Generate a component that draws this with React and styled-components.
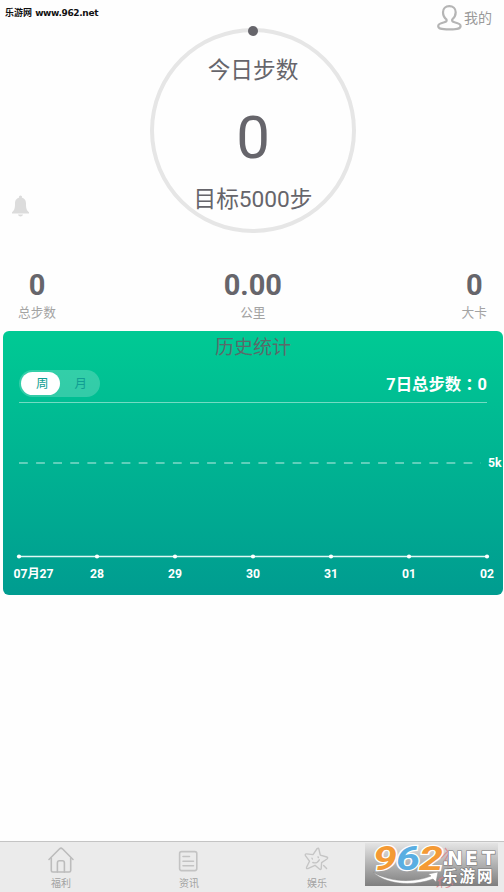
import React, { useState } from 'react';
import styled, { createGlobalStyle } from 'styled-components';

const GlobalStyle = createGlobalStyle`
  * {
    box-sizing: border-box;
  }

  body {
    margin: 0;
    background: #fefefe;
    font-family: Roboto, 'Noto Sans CJK SC', sans-serif;
    color: #66656b;
    overflow: hidden;
  }
`;

const Page = styled.div`
  display: flex;
  flex-direction: column;
  width: 504px;
  height: 892px;
  overflow: hidden;
  position: relative;
`;

const Header = styled.header`
  display: flex;
  justify-content: space-between;
  align-items: flex-start;
  height: 28px;
  padding: 4px 12px 0 5px;
`;

const SiteName = styled.span`
  margin-top: 2px;
  font-family: 'DejaVu Sans', 'Noto Sans CJK SC', sans-serif;
  font-size: 9px;
  line-height: 14px;
  font-weight: bold;
  color: #111;
  white-space: nowrap;

  span {
    letter-spacing: -0.35px;
  }
`;

const Profile = styled.a`
  display: flex;
  align-items: center;
  gap: 2px;
  font-size: 14px;
  line-height: 28px;
  color: #9a9a9a;

  svg {
    display: block;
    margin-top: -2px;
  }
`;

const Summary = styled.section`
  display: grid;
  grid-template-columns: 150px 206px 1fr;
  height: 239px;
`;

const Bell = styled.div`
  align-self: end;
  padding: 0 0 50px 11px;

  svg {
    display: block;
  }
`;

const Ring = styled.div`
  position: relative;
  display: flex;
  flex-direction: column;
  align-items: center;
  width: 206px;
  height: 205px;
  border: 4px solid #e6e6e6;
  border-radius: 50%;
`;

const RingDot = styled.span`
  position: absolute;
  top: -6px;
  left: 94px;
  width: 10px;
  height: 10px;
  border-radius: 50%;
  background: #66656b;
`;

const RingLabel = styled.span`
  margin-top: ${({ $top }) => $top}px;
  font-size: 22.7px;
  line-height: 30px;
  white-space: nowrap;
`;

const Steps = styled.span`
  margin-top: 22px;
  font-size: 60px;
  line-height: 60px;
`;

const Stats = styled.section`
  display: flex;
  justify-content: space-between;
  height: 64px;
  padding: 1px 17px 0 18px;
`;

const Stat = styled.div`
  display: flex;
  flex-direction: column;
  align-items: center;

  &:nth-child(2) {
    padding-right: 12px;
  }

  strong {
    font-size: 29px;
    line-height: 34px;
  }

  span {
    margin-top: 2px;
    font-size: 12.7px;
    line-height: 18px;
    color: #a3a3a3;
  }
`;

const Card = styled.section`
  height: 264px;
  margin: 0 1px 0 3px;
  border-radius: 6px;
  background: linear-gradient(#00ca94, #009c90);
  color: #fff;
`;

const CardTitle = styled.h2`
  margin: 0;
  padding-top: 2px;
  font-size: 19px;
  line-height: 30px;
  font-weight: normal;
  text-align: center;
  color: #5a6a6a;
`;

const CardBar = styled.div`
  display: flex;
  justify-content: space-between;
  align-items: center;
  height: 40px;
  margin: 0 16px;
  border-bottom: 1px solid rgba(255, 255, 255, 0.45);
`;

const Toggle = styled.div`
  display: flex;
  align-items: center;
  width: 81px;
  height: 27px;
  padding: 2px;
  margin-top: 1px;
  border-radius: 14px;
  background: rgba(255, 255, 255, 0.2);
`;

const ToggleButton = styled.button`
  width: 39px;
  height: 23px;
  padding: 1px 0 0 4px;
  border: none;
  border-radius: 12px;
  background: ${({ $active }) => ($active ? '#fff' : 'transparent')};
  color: #119e93;
  font: 12.5px/22px Roboto, 'Noto Sans CJK SC', sans-serif;
`;

const Total = styled.strong`
  margin-top: 4px;
  font-family: Roboto, 'Noto Sans CJK TC', sans-serif;
  font-size: 16.4px;
  line-height: 24px;
`;

const Chart = styled.svg`
  display: block;
  width: 500px;
  height: 191px;

  text {
    font: bold 12.2px Roboto, 'Noto Sans CJK SC', sans-serif;
    fill: #fff;
  }
`;

const TabBar = styled.nav`
  display: grid;
  grid-template-columns: repeat(4, 128px);
  height: 51px;
  margin: auto -5px 0 0;
  border-top: 1px solid #c4c4c4;
  background: #ebebeb;
`;

const Tab = styled.a`
  display: flex;
  flex-direction: column;
  align-items: center;
  margin-left: -6px;
  padding-top: 4px;
  font-size: 10px;
  line-height: 14px;
  color: ${({ $active }) => ($active ? '#dd8c92' : '#a2a2a2')};

  svg {
    display: block;
    margin-bottom: 3px;
  }
`;

const Badge = styled.div`
  position: absolute;
  left: 365px;
  top: 843px;
  width: 133px;
  height: 43px;

  svg {
    display: block;
    overflow: visible;
  }
`;

const days = ['07月27', '28', '29', '30', '31', '01', '02'];

const stats = [
  { value: '0', label: '总步数' },
  { value: '0.00', label: '公里' },
  { value: '0', label: '大卡' },
];

function PersonIcon() {
  return (
    <svg width="25" height="27" viewBox="0 0 25 27" fill="none" stroke="#b5b5b5" strokeWidth="2.2">
      <path d="M9.5 15.5C7 13.5 6 11 6 8.3C6 4.7 8.7 2.2 12.3 2.2S18.7 4.7 18.7 8.3C18.7 11 17.6 13.5 15.2 15.5C14.8 17 15.5 17.8 17.5 18.3C21 19.2 23.6 20 23.6 22C23.6 24.6 21 25.4 12.4 25.4S1.2 24.6 1.2 22C1.2 20 3.8 19.2 7.3 18.3C9.3 17.8 10 17 9.5 15.5Z" />
    </svg>
  );
}

function BellIcon() {
  return (
    <svg width="19" height="22" viewBox="0 0 19 22" fill="#dcdcdc">
      <circle cx="9.5" cy="2" r="1.6" />
      <path d="M9.5 2.6C13 2.6 15 5 15 8.5C15 13.5 15.6 15.6 18 17.2V18.6H1V17.2C3.4 15.6 4 13.5 4 8.5C4 5 6 2.6 9.5 2.6Z" />
      <path d="M7 19.6H12C11.8 20.8 10.8 21.4 9.5 21.4S7.2 20.8 7 19.6Z" />
    </svg>
  );
}

function HomeIcon() {
  return (
    <svg width="28" height="28" viewBox="0 0 28 28" fill="none" stroke="#bcbcbc" strokeWidth="1.6" strokeLinecap="round" strokeLinejoin="round">
      <path d="M2 13.5L12.6 2.8Q14 1.6 15.4 2.8L26 13.5" />
      <path d="M4.3 12V24.5Q4.3 26 5.8 26H22.2Q23.7 26 23.7 24.5V12" />
      <path d="M10.4 26V17Q10.4 14.8 12.4 14.8H15.4Q17.4 14.8 17.4 17V26" />
    </svg>
  );
}

function NewsIcon() {
  return (
    <svg width="28" height="28" viewBox="0 0 28 28" fill="none" stroke="#c3c3c3" strokeWidth="1.6" strokeLinecap="round">
      <rect x="4.6" y="5.6" width="17.2" height="19" rx="2" />
      <path d="M8 10.5H14.5M8 15.2H18.5M8 19.8H18.5" />
    </svg>
  );
}

function StarIcon() {
  return (
    <svg width="28" height="28" viewBox="0 0 28 28" fill="none" stroke="#c5c5c5" strokeWidth="1.4" strokeLinecap="round" strokeLinejoin="round">
      <path d="M14.2 2.5Q15.5 1.5 15.9 3.2L17.3 9.2L23.8 11Q25.5 11.8 24 13L18.6 16.6L18.2 22.6Q17.8 24.2 16.4 23L12 19.3L4.8 22.6Q3 23 3.6 21.3L6.5 15.2L2.4 9.6Q1.8 7.8 3.5 7.9L10 8.6Z" />
      <path d="M9 12.2L9.4 13M15 10.8L15.4 11.6M9.8 16.5Q14 18 16.3 13.8M20.6 19.4L23.6 22.6" />
    </svg>
  );
}

function SportIcon() {
  return (
    <svg width="28" height="28" viewBox="0 0 28 28" fill="none" stroke="#dd9a9e" strokeWidth="1.6" strokeLinecap="round">
      <circle cx="16" cy="5" r="2.5" />
      <path d="M9 12L14 9L18 14L22 13M14 9L12 17L17 20L16 26M12 17L9 23L5 24" />
    </svg>
  );
}

function SiteBadge() {
  return (
    <svg width="133" height="43" viewBox="0 0 133 43">
      <defs>
        <linearGradient id="badge" x1="0" y1="0" x2="0" y2="1">
          <stop offset="0" stopColor="#e4e4e4" />
          <stop offset="1" stopColor="#787878" />
        </linearGradient>
      </defs>
      <rect width="133" height="43" fill="url(#badge)" fillOpacity="0.94" />
      <g stroke="#da7f88" strokeWidth="1.3" fill="none" opacity="0.75">
        <path d="M80 5L84 10L80 17L85 23M76 15L82 9M73 38L78 34M75 35V43M83 36L88 42" />
      </g>
      <path d="M8 29C22 38 46 41 66 33L63 31L73 29L71 39L68 36C46 44 20 41 8 29Z" fill="#fff" stroke="#8b8b8b" strokeWidth="0.5" />
      <g fontFamily="Roboto, sans-serif" fontWeight="bold" fontStyle="italic" fontSize="33" stroke="#fff" strokeWidth="2.4" paintOrder="stroke">
        <text x="8" y="27" textLength="24" lengthAdjust="spacingAndGlyphs" fill="#f49a35">9</text>
        <text x="31" y="27" textLength="24" lengthAdjust="spacingAndGlyphs" fill="#5aaee2">6</text>
        <text x="54" y="27" textLength="24" lengthAdjust="spacingAndGlyphs" fill="#f49a35">2</text>
      </g>
      <g fill="#fff" stroke="#777" strokeWidth="1.2" paintOrder="stroke" fontWeight="bold">
        <text x="77 82 100 117" y="21.5" fontFamily="'DejaVu Sans', sans-serif" fontSize="19">.NET</text>
        <text x="77 94.5 112" y="38.5" fontFamily="'Noto Sans CJK SC', sans-serif" fontSize="15.5">乐游网</text>
      </g>
    </svg>
  );
}

function StepChart() {
  return (
    <Chart viewBox="0 0 500 191">
      <path d="M16 60H478" stroke="rgba(255,255,255,0.5)" strokeWidth="1.6" strokeDasharray="8.8 8.3" />
      <text x="485" y="63.5">5k</text>
      <path d="M16 153.5H484" stroke="#e0f8f4" strokeWidth="1.6" />
      {days.map((day, i) => (
        <g key={day}>
          <circle cx={16 + i * 78} cy="153.5" r="2.1" fill="#fff" />
          <text x={i === 0 ? 30.5 : 16 + i * 78} y="175" textAnchor="middle">
            {day}
          </text>
        </g>
      ))}
    </Chart>
  );
}

function App() {
  const [range, setRange] = useState('week');

  return (
    <>
      <GlobalStyle />
      <Page>
        <Header>
          <SiteName>乐游网 <span>www.962.net</span></SiteName>
          <Profile>
            <PersonIcon />
            我的
          </Profile>
        </Header>

        <Summary>
          <Bell>
            <BellIcon />
          </Bell>
          <Ring>
            <RingDot />
            <RingLabel $top={24}>今日步数</RingLabel>
            <Steps>0</Steps>
            <RingLabel $top={17}>目标5000步</RingLabel>
          </Ring>
        </Summary>

        <Stats>
          {stats.map((stat) => (
            <Stat key={stat.label}>
              <strong>{stat.value}</strong>
              <span>{stat.label}</span>
            </Stat>
          ))}
        </Stats>

        <Card>
          <CardTitle>历史统计</CardTitle>
          <CardBar>
            <Toggle>
              <ToggleButton $active={range === 'week'} onClick={() => setRange('week')}>周</ToggleButton>
              <ToggleButton $active={range === 'month'} onClick={() => setRange('month')}>月</ToggleButton>
            </Toggle>
            <Total>7日总步数：0</Total>
          </CardBar>
          <StepChart />
        </Card>

        <TabBar>
          <Tab><HomeIcon />福利</Tab>
          <Tab><NewsIcon />资讯</Tab>
          <Tab><StarIcon />娱乐</Tab>
          <Tab $active><SportIcon />计步</Tab>
        </TabBar>

        <Badge>
          <SiteBadge />
        </Badge>
      </Page>
    </>
  );
}

export default App;
